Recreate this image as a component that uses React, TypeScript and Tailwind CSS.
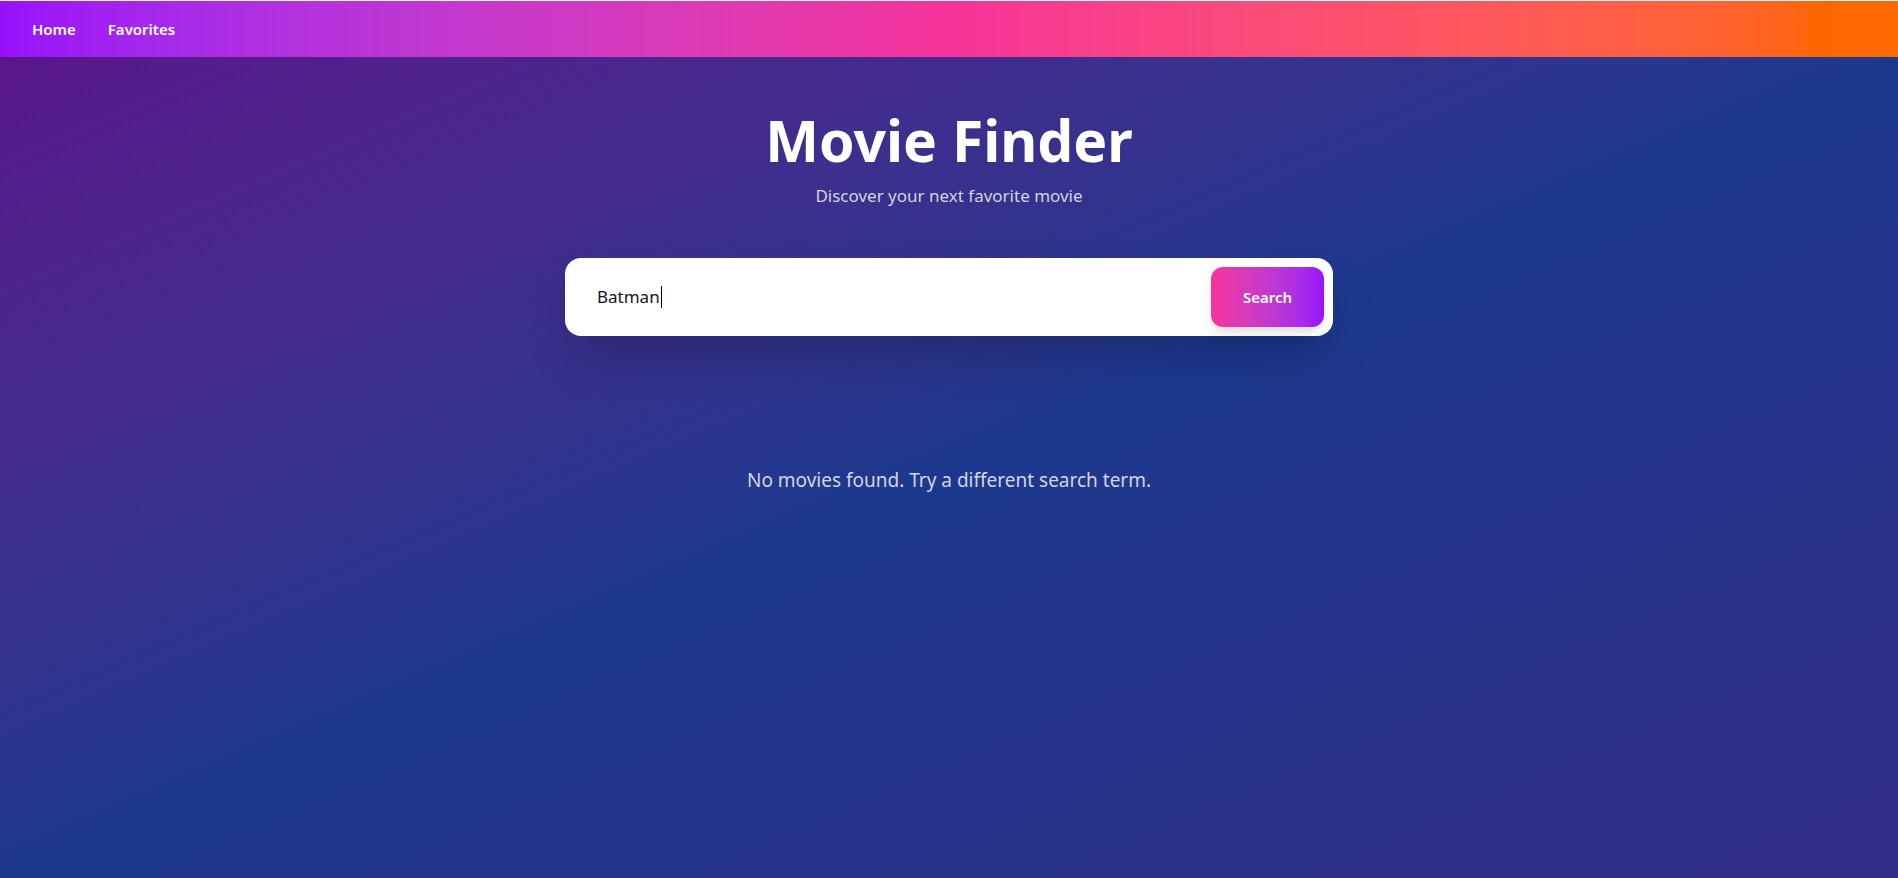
import { useState } from 'react';

export default function App() {
  const [query] = useState('Batman');
  const movies: string[] = [];

  return (
    <div className="min-h-screen flex flex-col bg-white pt-px font-['Segoe_UI','Noto_Sans',sans-serif]">
      <nav className="h-14 flex items-center gap-8 px-8 bg-gradient-to-r from-purple-600 via-pink-500 to-orange-500">
        <a href="#" className="text-white text-[15px] font-semibold">Home</a>
        <a href="#" className="text-white text-[15px] font-semibold">Favorites</a>
      </nav>

      <main className="flex-1 bg-gradient-to-br from-purple-900 via-blue-900 to-indigo-900 px-4 pt-[55px]">
        <div className="text-center">
          <h1 className="text-[57px] leading-none font-bold text-white">Movie Finder</h1>
          <p className="mt-[13px] text-[17px] leading-7 text-gray-300">Discover your next favorite movie</p>
        </div>

        <form
          onSubmit={(e) => e.preventDefault()}
          className="mx-auto mt-12 max-w-3xl h-[78px] flex items-center bg-white rounded-2xl shadow-2xl pl-8 pr-[9px]"
        >
          <div role="textbox" className="flex-1 flex items-center text-[17px] text-gray-900">
            <span>{query}</span>
            <span className="ml-px w-px h-[22px] bg-black" />
          </div>
          <button
            type="submit"
            className="h-[60px] w-[113px] rounded-xl bg-gradient-to-r from-pink-500 to-purple-600 text-white text-[15px] font-semibold shadow-lg"
          >
            Search
          </button>
        </form>

        {movies.length === 0 && (
          <p className="mt-[130px] text-center text-[19px] leading-7 text-gray-300">
            No movies found. Try a different search term.
          </p>
        )}
      </main>
    </div>
  );
}
